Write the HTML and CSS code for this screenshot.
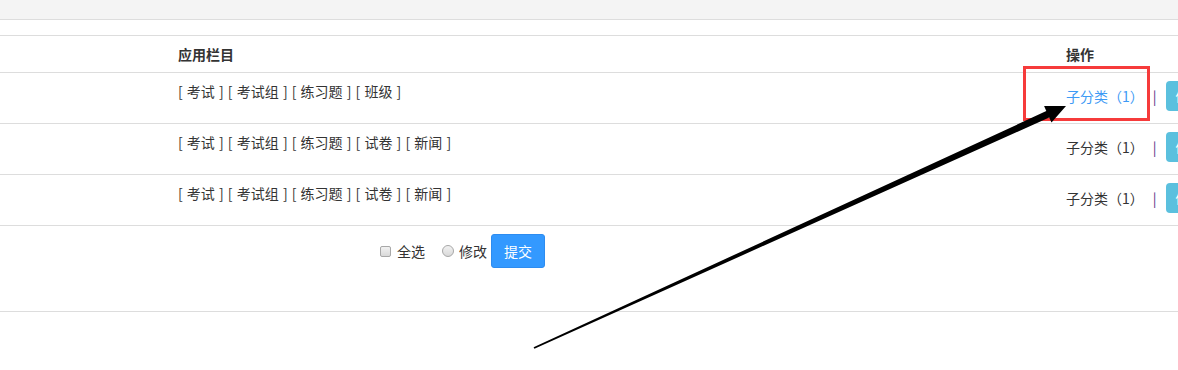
FILE: index.html
```html
<!DOCTYPE html>
<html lang="zh-CN">
<head>
    <meta charset="UTF-8">
    <meta name="viewport" content="width=device-width, initial-scale=1.0">
    <title>栏目管理</title>
    <link rel="stylesheet" href="styles.css">
</head>
<body>
    <div class="topbar"></div>

    <div class="table-wrap">
        <table class="list">
            <colgroup>
                <col class="col-name">
                <col class="col-apps">
                <col class="col-op">
            </colgroup>
            <thead>
                <tr>
                    <th></th>
                    <th>应用栏目</th>
                    <th>操作</th>
                </tr>
            </thead>
            <tbody>
                <tr>
                    <td></td>
                    <td class="apps">[ 考试 ] [ 考试组 ] [ 练习题 ] [ 班级 ]</td>
                    <td class="op">
                        <div class="ops">
                            <a href="#" class="sub active">子分类（1）</a>
                            <span class="sep">|</span>
                            <a href="#" class="btn-edit">修改</a>
                        </div>
                    </td>
                </tr>
                <tr>
                    <td></td>
                    <td class="apps">[ 考试 ] [ 考试组 ] [ 练习题 ] [ 试卷 ] [ 新闻 ]</td>
                    <td class="op">
                        <div class="ops">
                            <a href="#" class="sub">子分类（1）</a>
                            <span class="sep">|</span>
                            <a href="#" class="btn-edit">修改</a>
                        </div>
                    </td>
                </tr>
                <tr>
                    <td></td>
                    <td class="apps">[ 考试 ] [ 考试组 ] [ 练习题 ] [ 试卷 ] [ 新闻 ]</td>
                    <td class="op">
                        <div class="ops">
                            <a href="#" class="sub">子分类（1）</a>
                            <span class="sep">|</span>
                            <a href="#" class="btn-edit">修改</a>
                        </div>
                    </td>
                </tr>
                <tr class="foot">
                    <td colspan="3">
                        <div class="actions">
                            <label class="check"><input type="checkbox"> 全选</label>
                            <label class="check"><input type="radio" name="act"> 修改</label>
                            <button type="button" class="btn-submit">提交</button>
                        </div>
                    </td>
                </tr>
            </tbody>
        </table>
    </div>

    <!-- annotation drawn over the screenshot -->
    <div class="mark-box"></div>
    <svg class="arrow" width="1178" height="370" viewBox="0 0 1178 370">
        <polygon points="533.6,347.3 1046.3,111.1 1044.1,106.1 1066,106 1051.5,122.5 1049.2,117.5 534.4,348.7" fill="#000"/>
    </svg>
</body>
</html>
```

FILE: styles.css
```css
body {
    margin: 0;
    font-family: "Noto Sans CJK SC", "Liberation Sans", sans-serif;
    font-size: 14px;
    color: #333;
    background-color: #fff;
    overflow: hidden;
}
.topbar {
    height: 19px;
    background-color: #f4f4f4;
    border-bottom: 1px solid #ddd;
    margin-bottom: 15px;
}
.table-wrap {
    width: 100%;
    overflow: hidden;
}
.list {
    width: 1300px;
    table-layout: fixed;
    border-collapse: collapse;
    border-top: 1px solid #ddd;
}
.col-name {
    width: 170px;
}
.col-apps {
    width: 888px;
}
.col-op {
    width: 242px;
}
.list th,
.list td {
    padding: 8px;
    line-height: 20px;
    text-align: left;
    vertical-align: top;
    border-bottom: 1px solid #ddd;
    white-space: nowrap;
}
.list th {
    font-weight: bold;
}
.list td.apps {
    word-spacing: 1px;
}
.list td.op {
    padding-bottom: 12px;
}
.ops {
    display: flex;
    align-items: center;
    height: 30px;
}
.sub {
    color: #333;
    text-decoration: none;
}
.sub.active {
    color: #3d9af5;
}
.sep {
    color: #5e2f86;
    margin: 0 9px 0 9px;
}
.btn-edit {
    display: flex;
    align-items: center;
    height: 30px;
    padding: 0 10px;
    background-color: #5bc0de;
    border-radius: 4px;
    color: #fff;
    text-decoration: none;
    font-size: 13px;
}
.list tr.foot td {
    padding: 8px 0 43px 380px;
}
.actions {
    display: flex;
    align-items: center;
    height: 34px;
}
.check {
    display: flex;
    align-items: center;
}
.check input {
    -webkit-appearance: none;
    appearance: none;
    margin: 0 6px 0 0;
    border: 1px solid #a8a8a8;
    background: linear-gradient(#f2f2f2, #d9d9d9);
}
.check input[type="checkbox"] {
    width: 11px;
    height: 11px;
    border-radius: 2px;
}
.check input[type="radio"] {
    width: 12px;
    height: 12px;
    border-radius: 50%;
    margin-left: 17px;
    margin-right: 5px;
}
.btn-submit {
    height: 34px;
    margin-left: 4px;
    padding: 0 12px;
    background-color: #3399ff;
    border: 1px solid #2d8cf0;
    border-radius: 3px;
    color: #fff;
    font-family: inherit;
    font-size: 14px;
}
.mark-box {
    position: absolute;
    left: 1023px;
    top: 66px;
    width: 127px;
    height: 55px;
    box-sizing: border-box;
    border: 3px solid #f63b3b;
}
.arrow {
    position: absolute;
    left: 0;
    top: 0;
    pointer-events: none;
}
```
